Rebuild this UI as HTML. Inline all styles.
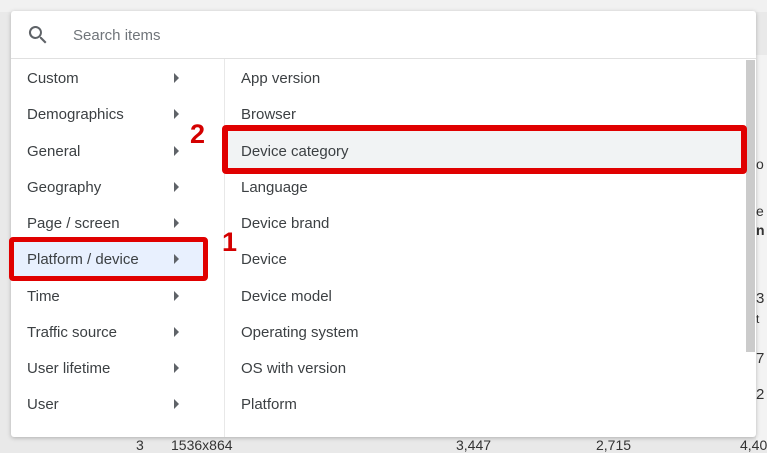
<!DOCTYPE html>
<html><head><style>
body{margin:0;width:767px;height:448px;overflow:hidden;background:#e9e9e9;font-family:"Liberation Sans",Arial,sans-serif;position:relative}
.abs{position:absolute}
.panel{left:11px;top:11px;width:745px;height:426px;background:#fff;box-shadow:0 1px 4px rgba(0,0,0,.25);border-radius:3px}
.row{position:absolute;font-size:15px;color:#3c4043;line-height:20px}
.arr{position:absolute;width:0;height:0;border-top:5px solid transparent;border-bottom:5px solid transparent;border-left:5px solid #5f6368}
.num{position:absolute;color:#d40000;font-weight:bold;font-size:27px;text-shadow:0 0 2px #fff,1px 1px 0 #fff}
.bg{position:absolute;font-size:14px;color:#333}
</style></head><body>
<div class="abs" style="left:0;top:0;width:767px;height:12px;background:#f1f1f1"></div>
<div class="abs" style="left:756px;top:55px;width:11px;height:393px;background:#f3f3f3"></div>
<div class="bg" style="left:756px;top:156px">o</div>
<div class="bg" style="left:756px;top:203px">e</div>
<div class="bg" style="left:756px;top:222px;font-weight:bold">n</div>
<div class="bg" style="left:756px;top:290px;font-size:15px">3</div>
<div class="bg" style="left:756px;top:312px;font-size:12px">t</div>
<div class="bg" style="left:756px;top:350px;font-size:15px">7</div>
<div class="bg" style="left:756px;top:386px;font-size:15px">2</div>
<div class="bg" style="left:136px;top:437px">3&nbsp;&nbsp;&nbsp;&nbsp;&nbsp;&nbsp;&nbsp;1536x864</div>
<div class="bg" style="left:456px;top:437px">3,447</div>
<div class="bg" style="left:596px;top:437px">2,715</div>
<div class="bg" style="left:740px;top:437px">4,40</div>
<div class="abs panel"></div>
<svg class="abs" style="left:26px;top:23px" width="24" height="24" viewBox="0 0 24 24"><path d="M15.5 14h-.8l-.3-.3A6.5 6.5 0 1 0 9.5 16a6.5 6.5 0 0 0 4.2-1.6l.3.3v.8l5 5 1.5-1.5-5-5zm-6 0a4.5 4.5 0 1 1 0-9 4.5 4.5 0 0 1 0 9z" fill="#5f6368"/></svg>
<div class="row" style="left:73px;top:26px;color:#70757a">Search items</div>
<div class="abs" style="left:11px;top:58px;width:745px;height:1px;background:#e0e0e0"></div>
<div class="abs" style="left:224px;top:59px;width:1px;height:378px;background:#e8e8e8"></div>
<div class="abs" style="left:746px;top:60px;width:9px;height:292px;background:#cbcbcb"></div>
<div class="abs" style="left:14px;top:241px;width:192px;height:37px;background:#e8f0fe"></div>
<div class="abs" style="left:225px;top:129px;width:517px;height:41px;background:#f1f3f4"></div>

<div class="row" style="left:27px;top:69px">Custom</div><div class="arr" style="left:174px;top:73px"></div>
<div class="row" style="left:27px;top:105px">Demographics</div><div class="arr" style="left:174px;top:109px"></div>
<div class="row" style="left:27px;top:142px">General</div><div class="arr" style="left:174px;top:146px"></div>
<div class="row" style="left:27px;top:178px">Geography</div><div class="arr" style="left:174px;top:182px"></div>
<div class="row" style="left:27px;top:214px">Page / screen</div><div class="arr" style="left:174px;top:218px"></div>
<div class="row" style="left:27px;top:250px">Platform / device</div><div class="arr" style="left:174px;top:254px"></div>
<div class="row" style="left:27px;top:287px">Time</div><div class="arr" style="left:174px;top:291px"></div>
<div class="row" style="left:27px;top:323px">Traffic source</div><div class="arr" style="left:174px;top:327px"></div>
<div class="row" style="left:27px;top:359px">User lifetime</div><div class="arr" style="left:174px;top:363px"></div>
<div class="row" style="left:27px;top:395px">User</div><div class="arr" style="left:174px;top:399px"></div>

<div class="row" style="left:241px;top:69px">App version</div>
<div class="row" style="left:241px;top:105px">Browser</div>
<div class="row" style="left:241px;top:142px">Device category</div>
<div class="row" style="left:241px;top:178px">Language</div>
<div class="row" style="left:241px;top:214px">Device brand</div>
<div class="row" style="left:241px;top:250px">Device</div>
<div class="row" style="left:241px;top:287px">Device model</div>
<div class="row" style="left:241px;top:323px">Operating system</div>
<div class="row" style="left:241px;top:359px">OS with version</div>
<div class="row" style="left:241px;top:395px">Platform</div>

<div class="abs" style="left:9px;top:237px;width:189px;height:34px;border:5px solid #e00000;border-radius:4px"></div>
<div class="abs" style="left:222px;top:125px;width:513px;height:37px;border:6px solid #e00000;border-radius:4px"></div>
<div class="num" style="left:190px;top:119px">2</div>
<div class="num" style="left:222px;top:227px">1</div>
</body></html>
